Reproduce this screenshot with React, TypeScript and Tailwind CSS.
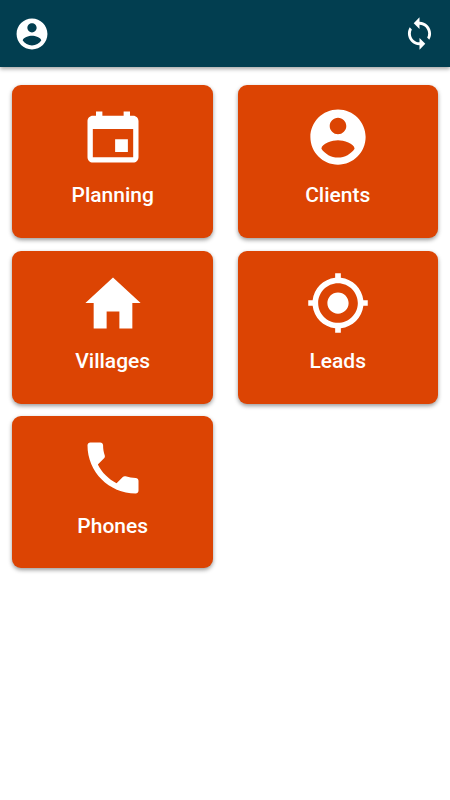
import { IoMdCalendar, IoMdCall, IoMdContact, IoMdHome, IoMdLocate, IoMdSync } from "react-icons/io";

const tiles = [
  { label: "Planning", icon: <IoMdCalendar /> },
  { label: "Clients", icon: <IoMdContact /> },
  { label: "Villages", icon: <IoMdHome /> },
  { label: "Leads", icon: <IoMdLocate /> },
  { label: "Phones", icon: <IoMdCall /> },
];

function TopBar() {
  return (
    <header className="flex h-[67px] items-center justify-between bg-[#023e50] pr-3 pl-[13.3px] text-white shadow-[0_2px_4px_rgba(0,0,0,0.35)]">
      <button aria-label="Account" className="text-[38px]">
        <IoMdContact />
      </button>
      <button aria-label="Sync" className="text-[37px]">
        <IoMdSync />
      </button>
    </header>
  );
}

export default function App() {
  return (
    <div className="h-[800px] w-[450px] overflow-hidden bg-white font-['Roboto',sans-serif]">
      <TopBar />
      <main className="grid grid-cols-[201.4px_199.8px] grid-rows-[153.3px_153px_152px] justify-between gap-y-[12.5px] pt-[18.2px] pr-[12.4px] pl-3">
        {tiles.map((tile) => (
          <button
            key={tile.label}
            className="flex flex-col items-center justify-center rounded-[9px] bg-[#dc4403] pb-[11.6px] text-white shadow-[0_2px_4px_rgba(0,0,0,0.4)]"
          >
            <span className="text-[68px]">{tile.icon}</span>
            <span className="mt-[10.2px] text-[21px] leading-7 font-medium">{tile.label}</span>
          </button>
        ))}
      </main>
    </div>
  );
}
